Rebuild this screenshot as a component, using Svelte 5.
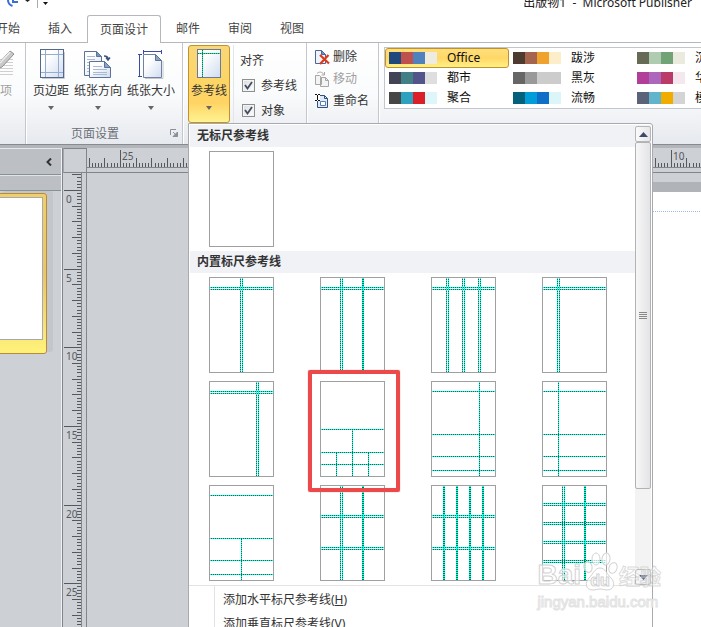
<script>
  const tabsBefore = ['开始', '插入'];
  const tabsAfter = ['邮件', '审阅', '视图'];

  const schemes = [
    { name: 'Office', colors: ['#1f497d', '#c0504d', '#4f81bd', '#eeece1'], active: true },
    { name: '都市', colors: ['#424456', '#438086', '#53548a', '#dedede'] },
    { name: '聚合', colors: ['#464646', '#2da2bf', '#da1f28', '#def5fa'] },
    { name: '跋涉', colors: ['#4e3b30', '#a5644e', '#f0a22e', '#fbeec9'] },
    { name: '黑灰', colors: ['#666666', '#999999', '#cccccc', '#cccccc'] },
    { name: '流畅', colors: ['#04617b', '#009dd9', '#0f6fc6', '#dbf5f9'] },
    { name: '沉稳', colors: ['#676a55', '#b0ccb0', '#72a376', '#eaebde'] },
    { name: '华丽', colors: ['#b13f9a', '#ac66bb', '#ba3b68', '#f4e7ed'] },
    { name: '模块', colors: ['#5a6378', '#60b5cc', '#f0ad00', '#d4d4d6'] }
  ];

  // h: rows, v: columns; an entry [position, start] begins part-way down the page
  const layouts = [
    { h: [10, 12], v: [31, 33] },
    { h: [10, 12], v: [20, 22, 42, 43] },
    { h: [10, 12], v: [15, 17, 31, 33, 47, 49] },
    { h: [10, 12], v: [15, 17] },
    { h: [10, 12], v: [47, 49] },
    { h: [48, 71, 83], v: [[32, 48], [16, 71], [48, 71]] },
    { h: [10, 53, 75, 89], v: [48] },
    { h: [10, 53, 75, 89], v: [16] },
    { h: [10, 53, 75, 89], v: [[32, 53]] },
    { h: [30, 32, 62, 64], v: [20, 22, 42, 43] },
    { h: [30, 32, 62, 64], v: [12, 13, 25, 26, 38, 39, 51, 52] },
    { h: [18, 20, 37, 39, 56, 58, 75, 77], v: [20, 22, 42, 43] }
  ];

  const unit = 15.73;
  function ticks(origin, length, from) {
    const out = [];
    for (let i = -200; i < 600; i++) {
      const p = Math.round(origin + (i * unit) / 5);
      if (p < from || p > length) continue;
      out.push({ p, size: i % 25 === 0 ? 17 : i % 5 === 0 ? 9 : 4 });
    }
    return out;
  }
  const hTicks = ticks(33, 2400, 0);
  const vTicks = ticks(17, 1600, 1);
  const vLabels = [0, 5, 10, 15, 20, 25].map((n, i) => ({ n, y: Math.round(17 + i * unit * 5) }));
  const hLabels = [25, 20, 15, 10, 5, 0, 5, 10].map((n, i) => ({ n, x: Math.round(33 + i * unit * 5) }));

  let snapGuides = $state(true);
  let snapObjects = $state(true);
</script>

{#snippet caret()}
  <svg class="caret" width="6" height="4" viewBox="0 0 6 4" aria-hidden="true"><path d="M0 0h6L3 4z" fill="#666" /></svg>
{/snippet}

{#snippet sheet(layout)}
  <svg class="sheet" width="65" height="96" viewBox="0 0 65 96" shape-rendering="crispEdges" aria-hidden="true">
    <rect x=".5" y=".5" width="64" height="95" fill="#fff" stroke="#a0a0a0" />
    {#each layout.v as col}
      {@const x = Array.isArray(col) ? col[0] : col}
      {@const y = Array.isArray(col) ? col[1] : 1}
      <path d="M{x + 0.5} {y}V95" stroke="#00ffff" />
      <path d="M{x + 0.5} {y}V95" stroke="#007a3d" stroke-dasharray="1 1" stroke-dashoffset={y % 2} />
    {/each}
    {#each layout.h as row}
      <path d="M1 {row + 0.5}H64" stroke="#00ffff" />
      <path d="M1 {row + 0.5}H64" stroke="#007a3d" stroke-dasharray="1 1" stroke-dashoffset="1" />
    {/each}
  </svg>
{/snippet}

<div class="app">
  <header class="titlebar">
    <svg class="quick" width="56" height="10" viewBox="0 0 56 10" aria-hidden="true">
      <path d="M8 0c0 3 1.500 5 4.500 6" fill="none" stroke="#3d6fd0" stroke-width="2" />
      <path d="M13 0v2h5" fill="none" stroke="#3d6fd0" stroke-width="2" />
      <path d="M25 0h5l-2.500 2z" fill="#222" />
      <path d="M37.500 0v8" stroke="#aaa" />
      <path d="M43 2h5l-2.500 3z" fill="#111" />
    </svg>
    <span class="title">出版物1&nbsp; -&nbsp; Microsoft Publisher</span>
  </header>

  <nav class="tabs">
    {#each tabsBefore as tab}<button>{tab}</button>{/each}
    <button class="active">页面设计</button>
    {#each tabsAfter as tab}<button>{tab}</button>{/each}
  </nav>

  <section class="ribbon">
    <div class="group first">
      <div class="tools">
        <button class="big dim">
          <svg width="30" height="30" viewBox="0 0 30 30" aria-hidden="true">
            <path d="M2 10.500h26M2 13.500h26M2 16.500h26M2 19.500h26M2 22.500h26M2 25.500h26" stroke="#d0d0d0" />
            <path d="M10 21l3-6L25 2l4 3-12 13z" fill="#c9c9c9" stroke="#8e8e8e" />
            <path d="M15 14L25 3" stroke="#eee" stroke-width="1.500" />
          </svg>
          <span>选项</span>
        </button>
      </div>
    </div>

    <div class="group">
      <div class="tools page">
        <button class="big">
          <svg width="30" height="30" viewBox="0 0 30 30" aria-hidden="true">
            <defs>
              <linearGradient id="paper" x1="0" y1="0" x2="1" y2="1"><stop offset=".3" stop-color="#fff" /><stop offset="1" stop-color="#cfdcf0" /></linearGradient>
            </defs>
            <path d="M28.500 3v26.500H6" fill="none" stroke="#c9ccd2" />
            <rect x="4.500" y=".5" width="23" height="28" fill="url(#paper)" stroke="#55688a" />
            <path d="M9.500 1v27M22.500 1v27M5 5.500h22M5 23.500h22" stroke="#93aed0" />
          </svg>
          <span>页边距</span>{@render caret()}
        </button>
        <button class="big">
          <svg width="30" height="30" viewBox="0 0 30 30" aria-hidden="true">
            <path d="M1.500 2.500h12l5 5V26.500H1.500z" fill="url(#paper)" stroke="#5d7396" />
            <path d="M13.500 2.500v5h5z" fill="#7892b8" stroke="#5d7396" />
            <path d="M4 7.500h8M4 10.500h8M4 13.500h8M4 16.500h8M4 19.500h8M4 22.500h8" stroke="#a9bad4" />
            <path d="M6.500 12.500h15l6 6v10h-21z" fill="url(#paper)" stroke="#5d7396" />
            <path d="M21.500 12.500v6h6z" fill="#8aa4c9" stroke="#5d7396" />
            <path d="M10 17.500h9M10 20.500h14M10 23.500h14M10 25.500h14" stroke="#a9bad4" />
            <path d="M21 7c3 0 4 1 4 3M23 8.500l2 2.500 2-2.500" fill="none" stroke="#3d5280" stroke-width="1.500" />
          </svg>
          <span>纸张方向</span>{@render caret()}
        </button>
        <button class="big">
          <svg width="30" height="30" viewBox="0 0 30 30" aria-hidden="true">
            <path d="M7.500 5.500h12l6 6v17h-18z" fill="url(#paper)" stroke="#7083a4" />
            <path d="M19.500 5.500v6h6z" fill="#8da4c6" stroke="#5d7396" />
            <path d="M27 12v17.500H9" fill="none" stroke="#c4c8ce" />
            <path d="M7 2.500h19M7.500 1v4M25.500 1v4M3.500 5v23M2 5.500h4M2 27.500h4" stroke="#3c4aa8" fill="none" />
          </svg>
          <span>纸张大小</span>{@render caret()}
        </button>
      </div>
      <footer>
        <span>页面设置</span>
        <button class="launcher" aria-label="页面设置">
          <svg width="8" height="8" viewBox="0 0 8 8"><path d="M.5 6V.5H6" fill="none" stroke="#8a8f98" /><path d="M3 3l3 3M7.500 3v4.500H3z" stroke="#8a8f98" fill="#8a8f98" /></svg>
        </button>
      </footer>
    </div>

    <div class="group">
      <div class="tools">
        <div class="dropdown">
          <button class="big pressed" aria-expanded="true">
            <svg width="30" height="30" viewBox="0 0 30 30" aria-hidden="true">
              <rect x="3.500" y=".5" width="23" height="28" fill="url(#paper)" stroke="#6b7a93" />
              <path d="M8.500 1v27M4 4.500h22" stroke="#1fe0a0" />
              <path d="M8.500 1v27M4 4.500h22" stroke="#0a7d50" stroke-dasharray="1 1" />
            </svg>
            <span>参考线</span>{@render caret()}
          </button>

          <div class="menu">
            <div class="body">
              <div class="list">
                <h2>无标尺参考线</h2>
                <div class="sheets">
                  <button aria-label="无标尺参考线">{@render sheet({ h: [], v: [] })}</button>
                </div>
                <h2>内置标尺参考线</h2>
                <div class="sheets">
                  {#each layouts as layout, i}
                    <button aria-label="内置标尺参考线 {i + 1}" class:marked={i === 5}>{@render sheet(layout)}</button>
                  {/each}
                </div>
              </div>
              <div class="scroll">
                <button aria-label="向上"><svg width="9" height="5" viewBox="0 0 9 5"><path d="M0 5h9L4.500 0z" fill="#3c4a6b" /></svg></button>
                <div class="thumb"><i></i><i></i><i></i><i></i></div>
                <div class="track"></div>
                <button aria-label="向下"><svg width="9" height="5" viewBox="0 0 9 5"><path d="M0 0h9L4.500 5z" fill="#3c4a6b" /></svg></button>
              </div>
            </div>
            <div class="commands">
              <button>添加水平标尺参考线(<u>H</u>)</button>
              <button>添加垂直标尺参考线(<u>V</u>)</button>
            </div>
          </div>
        </div>
        <div class="align">
          <span>对齐</span>
          <label><input type="checkbox" bind:checked={snapGuides} />参考线</label>
          <label><input type="checkbox" bind:checked={snapObjects} />对象</label>
        </div>
      </div>
    </div>

    <div class="group">
      <div class="tools pages">
        <button>
          <svg width="16" height="16" viewBox="0 0 16 16" aria-hidden="true">
            <path d="M1.500 1.500h6l4 4v9h-10z" fill="#eef4fc" stroke="#4a6796" /><path d="M7.500 1.500v4h4z" fill="#7693bd" stroke="#4a6796" />
            <path d="M6 6l9 8.500M14.500 6L6 15" stroke="#dd3b1c" stroke-width="2.200" />
          </svg>删除
        </button>
        <button class="dim">
          <svg width="16" height="16" viewBox="0 0 16 16" aria-hidden="true">
            <path d="M1.500 4.500h4l2 2v7h-6zM6.500 6.500h5l3 3v6h-8z" fill="#f4f4f4" stroke="#a6a6a6" /><path d="M11.500 6.500v3h3M3 2.500c2-2 5-2 7 1M10.500 1v3h-3" fill="none" stroke="#a6a6a6" />
          </svg>移动
        </button>
        <button>
          <svg width="16" height="16" viewBox="0 0 16 16" aria-hidden="true">
            <path d="M3.500 2.500h7l3 3v9h-10z" fill="#dfeafa" stroke="#33507f" /><path d="M10.500 2.500v3h3" fill="none" stroke="#33507f" />
            <path d="M6.500 8.500h5v4h-5z" fill="#fff" stroke="#5c7cab" />
            <path d="M1 1h5v7H1z" fill="#fff" /><path d="M1 1.500h2M4 1.500h2M1 7.500h2M4 7.500h2M3.500 2v5" stroke="#111" />
          </svg>重命名
        </button>
      </div>
    </div>

    <div class="group wide">
      <div class="gallery">
        {#each schemes as s}
          <button class:active={s.active}>
            <span class="swatch">{#each s.colors as c}<i style="background:{c}"></i>{/each}</span>{s.name}
          </button>
        {/each}
      </div>
    </div>
  </section>

  <main class="work">
    <aside class="pane">
      <div class="head">
        <button aria-label="折叠"><svg width="6" height="8" viewBox="0 0 6 8"><path d="M5 .5L1.500 4 5 7.500" fill="none" stroke="#333" stroke-width="2" /></svg></button>
      </div>
      <div class="strip"></div>
      <div class="current"><div class="mini"></div></div>
    </aside>
    <div class="canvas">
      <div class="corner"></div>
      <div class="hruler">
        <svg width="100%" height="19" aria-hidden="true">
          <g shape-rendering="crispEdges">{#each hTicks as t}<rect x={t.p} y={19 - t.size} width="1" height={t.size} fill="#55585d" />{/each}</g>
          {#each hLabels as l}<text x={l.x + 2} y="12">{l.n}</text>{/each}
        </svg>
      </div>
      <div class="vruler">
        <svg width="18" height="100%" aria-hidden="true">
          <g shape-rendering="crispEdges">{#each vTicks as t}<rect x={18 - t.size} y={t.p} width={t.size} height="1" fill="#55585d" />{/each}</g>
          {#each vLabels as l}<text x="3" y={l.y + 13}>{l.n}</text>{/each}
        </svg>
      </div>
      <div class="desk"><div class="paper"></div></div>
    </div>
  </main>

  <div class="watermark">
    <div class="brand">
      <span>Bai</span>
      <svg width="38" height="40" viewBox="0 0 36 40" aria-hidden="true">
        <g fill="#fff" fill-opacity=".7" stroke="#d2d2d2">
          <ellipse cx="6" cy="15" rx="4" ry="5.500" transform="rotate(-15 6 15)" /><ellipse cx="14" cy="7" rx="4" ry="6" />
          <ellipse cx="24" cy="7" rx="4" ry="6" transform="rotate(8 24 7)" /><ellipse cx="31" cy="16" rx="4" ry="5.500" transform="rotate(20 31 16)" />
          <path d="M18 16c5 0 7 6 11 10s4 12-4 12c-3 0-4-1-7-1s-4 1-7 1c-8 0-8-8-4-12s6-10 11-10z" />
        </g>
        <text x="18" y="34" text-anchor="middle">du</text>
      </svg>
      <span class="cn">经验</span>
    </div>
    <div class="url">jingyan.baidu.com</div>
  </div>
</div>

<style>
  .app {
    position: relative;
    display: flex;
    flex-direction: column;
    height: 100vh;
    overflow: hidden;
    background: #fff;
    color: #333;
    font: 12px/20px 'Noto Sans', 'Noto Sans CJK SC', sans-serif;
  }
  button {
    padding: 0;
    border: 0;
    background: none;
    color: inherit;
    font: inherit;
    white-space: nowrap;
  }
  svg { display: block; flex: none; }
  h2 { margin: 0; }

  .titlebar {
    display: flex;
    justify-content: space-between;
    height: 15px;
    padding-right: 9px;
    color: #222;
    line-height: 6px;
  }

  .tabs { display: flex; height: 28px; margin-left: -18px; color: #444; }
  .tabs button { flex: none; padding: 0 14px; line-height: 26px; }
  .tabs .active {
    z-index: 1;
    margin: 0 1px;
    padding: 0 12px;
    border: 1px solid #b4b7bc;
    border-bottom: 0;
    border-radius: 3px 3px 0 0;
    background: #fff;
  }

  .ribbon {
    display: flex;
    flex: none;
    height: 103px;
    margin-top: -1px;
    box-sizing: border-box;
    border-top: 1px solid #b4b7bc;
    border-bottom: 1px solid #878b91;
    background: linear-gradient(#fff, #fafbfc 50%, #e6e9ee);
  }
  .group {
    display: flex;
    flex: none;
    flex-direction: column;
    padding: 2px 5px 0;
    border-right: 1px solid #c3c7cd;
    box-shadow: 1px 0 #fff;
  }
  .first { width: 15px; }
  .first .tools { margin-left: -20px; }
  .first .big { width: 30px; }
  .tools { display: flex; height: 78px; }
  .page { gap: 1px; width: 146px; }
  .group footer { display: flex; position: relative; justify-content: center; padding-right: 18px; color: #6a6f78; line-height: 22px; }
  .launcher { position: absolute; right: -1px; top: 6px; }
  .big {
    display: flex;
    flex-direction: column;
    align-items: center;
    box-sizing: border-box;
    height: 78px;
    padding: 4px 2px 0;
    line-height: 24px;
  }
  .big .caret { margin-top: 3px; }
  .dim { color: #a0a0a0; }
  .pressed {
    width: 42px;
    padding: 3px 0 0;
    border: 1px solid #c2902c;
    border-radius: 3px;
    background: linear-gradient(#f8d778, #fdd565 50%, #ffd465 75%, #fff392);
  }
  .dropdown { position: relative; }
  .align {
    display: flex;
    flex-direction: column;
    width: 61px;
    margin-left: 3px;
    padding: 3px 0 0 6px;
    border-left: 1px solid #e3e5e9;
    line-height: 25px;
  }
  .align label { display: flex; gap: 6px; align-items: center; padding-left: 2px; }
  .align input {
    appearance: none;
    width: 13px;
    height: 13px;
    margin: 0;
    border: 1px solid #8e8f8f;
    background: linear-gradient(135deg, #d9dbde, #fff);
    box-shadow: inset 0 0 0 1px #f4f4f4;
  }
  .align input:checked {
    background: url("data:image/svg+xml,%3Csvg xmlns='http://www.w3.org/2000/svg' viewBox='0 0 11 11'%3E%3Cpath d='M2 5l2.500 3.500L9 2' fill='none' stroke='%23444c60' stroke-width='1.800'/%3E%3C/svg%3E"), linear-gradient(135deg, #d9dbde, #fff);
  }
  .pages { flex-direction: column; width: 61px; padding-top: 1px; height: 77px; }
  .pages button { display: flex; align-items: center; gap: 3px; height: 22px; padding-left: 2px; }

  .wide { flex: 1; min-width: 0; padding-top: 4px; border: 0; padding-right: 0; }
  .gallery {
    display: grid;
    grid-template-rows: repeat(3, 20px);
    grid-auto-columns: 124px;
    grid-auto-flow: column;
    margin-right: -8px;
    overflow: hidden;
    border: 1px solid #c3c7cd;
    background: #fff;
    color: #111;
  }
  .gallery button { display: flex; align-items: center; gap: 10px; padding-left: 4px; line-height: 20px; }
  .gallery .active {
    padding-left: 3px;
    border: 1px solid #c2902c;
    border-radius: 3px;
    background: linear-gradient(#ffe07c, #ffd767 50%, #fff184);
    line-height: 18px;
  }
  .swatch { display: flex; }
  .swatch i { width: 12px; height: 12px; }

  .menu {
    position: absolute;
    z-index: 5;
    top: 100%;
    left: 0;
    width: 463px;
    border: 1px solid #a7abb0;
    border-radius: 0 3px 0 0;
    background: #fff;
  }
  .body { display: flex; padding: 1px 0 0 1px; border-bottom: 1px solid #e2e3e5; }
  .list { flex: 1; }
  .list h2 {
    padding-left: 7px;
    background: #f0f2f6;
    color: #333;
    font-size: 12px;
    font-weight: 700;
    line-height: 22px;
  }
  .sheets {
    display: grid;
    grid-template-columns: repeat(4, 65px);
    gap: 8px 46px;
    padding: 4px 19px;
  }
  .sheets button { position: relative; }
  .marked::after {
    content: '';
    position: absolute;
    inset: -11px -15px -15px -12px;
    z-index: 1;
    border: 4px solid #ec4a4a;
    border-radius: 2px;
    box-shadow: 0 0 1px #ec4a4a;
  }
  .scroll {
    display: flex;
    flex-direction: column;
    width: 16px;
    margin-right: 1px;
    padding-top: 1px;
    background: #f3f3f3;
  }
  .scroll button {
    display: grid;
    place-items: center;
    height: 16px;
    border: 1px solid #b4b6b9;
    border-radius: 2px;
    background: linear-gradient(90deg, #fafafa, #e6e7e9);
  }
  .thumb {
    display: flex;
    flex: 346;
    flex-direction: column;
    align-items: center;
    justify-content: center;
    gap: 1px;
    border: 1px solid #b0b2b5;
    border-radius: 2px;
    background: linear-gradient(90deg, #f7f7f7, #e3e4e6);
  }
  .thumb i { width: 8px; height: 1px; background: #888; }
  .track { flex: 80; }
  .commands { display: flex; flex-direction: column; margin-left: 25px; border-left: 1px solid #e2e3e5; padding-top: 2px; }
  .commands button { padding-left: 8px; text-align: left; line-height: 24px; }

  .work { display: flex; flex: 1; min-height: 0; background: #cdd0d5; border-top: 3px solid #b2b5ba; }
  .pane { width: 61px; flex: none; border-right: 1px solid #eef0f2; }
  .head {
    display: flex;
    justify-content: flex-end;
    align-items: center;
    height: 25px;
    padding-right: 9px;
    border-top: 1px solid #e6e8ea;
    border-bottom: 1px solid #879297;
    background: #bcbfc3;
  }
  .strip { height: 14px; border-top: 1px solid #e0e2e4; border-bottom: 1px solid #879297; background: #bcbfc3; }
  .current {
    margin: 2px 14px 0 -4px;
    padding: 3px 3px 13px 0;
    border: 1px solid #b98a3a;
    border-radius: 3px;
    background: linear-gradient(#f0cf68, #e9c667 50%, #fff27a);
    box-shadow: 6px -2px #c3c6cb;
  }
  .mini { height: 141px; border: 1px solid #a4a8b8; background: #fff; }
  .canvas {
    display: grid;
    flex: 1;
    min-width: 0;
    grid-template: 25px 1fr / 24px 1fr;
    border-left: 1px solid #82868c;
  }
  .corner { border: 1px solid #82868c; border-left-color: #a3a7ac; }
  .hruler { min-width: 0; overflow: hidden; border-bottom: 1px solid #82868c; }
  .hruler svg { border-bottom: 1px solid #82868c; }
  .vruler { min-height: 0; overflow: hidden; border-right: 1px solid #82868c; }
  .vruler svg { border-right: 1px solid #82868c; }
  .canvas text { font-size: 10px; fill: #55585d; }
  .desk { display: flex; min-width: 0; }
  .paper {
    flex: 1;
    margin: 9px 0 0 60%;
    border-top: 10px solid #b0b3b8;
    background: linear-gradient(#fff, #fff) top / 100% 19px no-repeat, repeating-linear-gradient(90deg, #9fb8ee 0 1px, #fff 1px 2px) 0 19px / 100% 1px no-repeat #fff;
  }

  .watermark { position: absolute; z-index: 9; right: 40px; bottom: 15px; color: #fff9; -webkit-text-stroke: 1px #d2d2d2; }
  .brand { display: flex; align-items: flex-end; justify-content: flex-end; font: 700 28px/34px 'Liberation Sans', sans-serif; }
  .brand text { font-size: 16px; fill: #fff; stroke: #d2d2d2; stroke-width: 1px; -webkit-text-stroke: 0; }
  .brand .cn { color: #fff6; font: 700 21px/34px 'Noto Sans CJK SC', sans-serif; -webkit-text-stroke: 1px #c4c4c499; }
  .url { font: 400 15px/20px 'Liberation Sans', sans-serif; -webkit-text-stroke: 1px #e2e2e2; }
</style>
